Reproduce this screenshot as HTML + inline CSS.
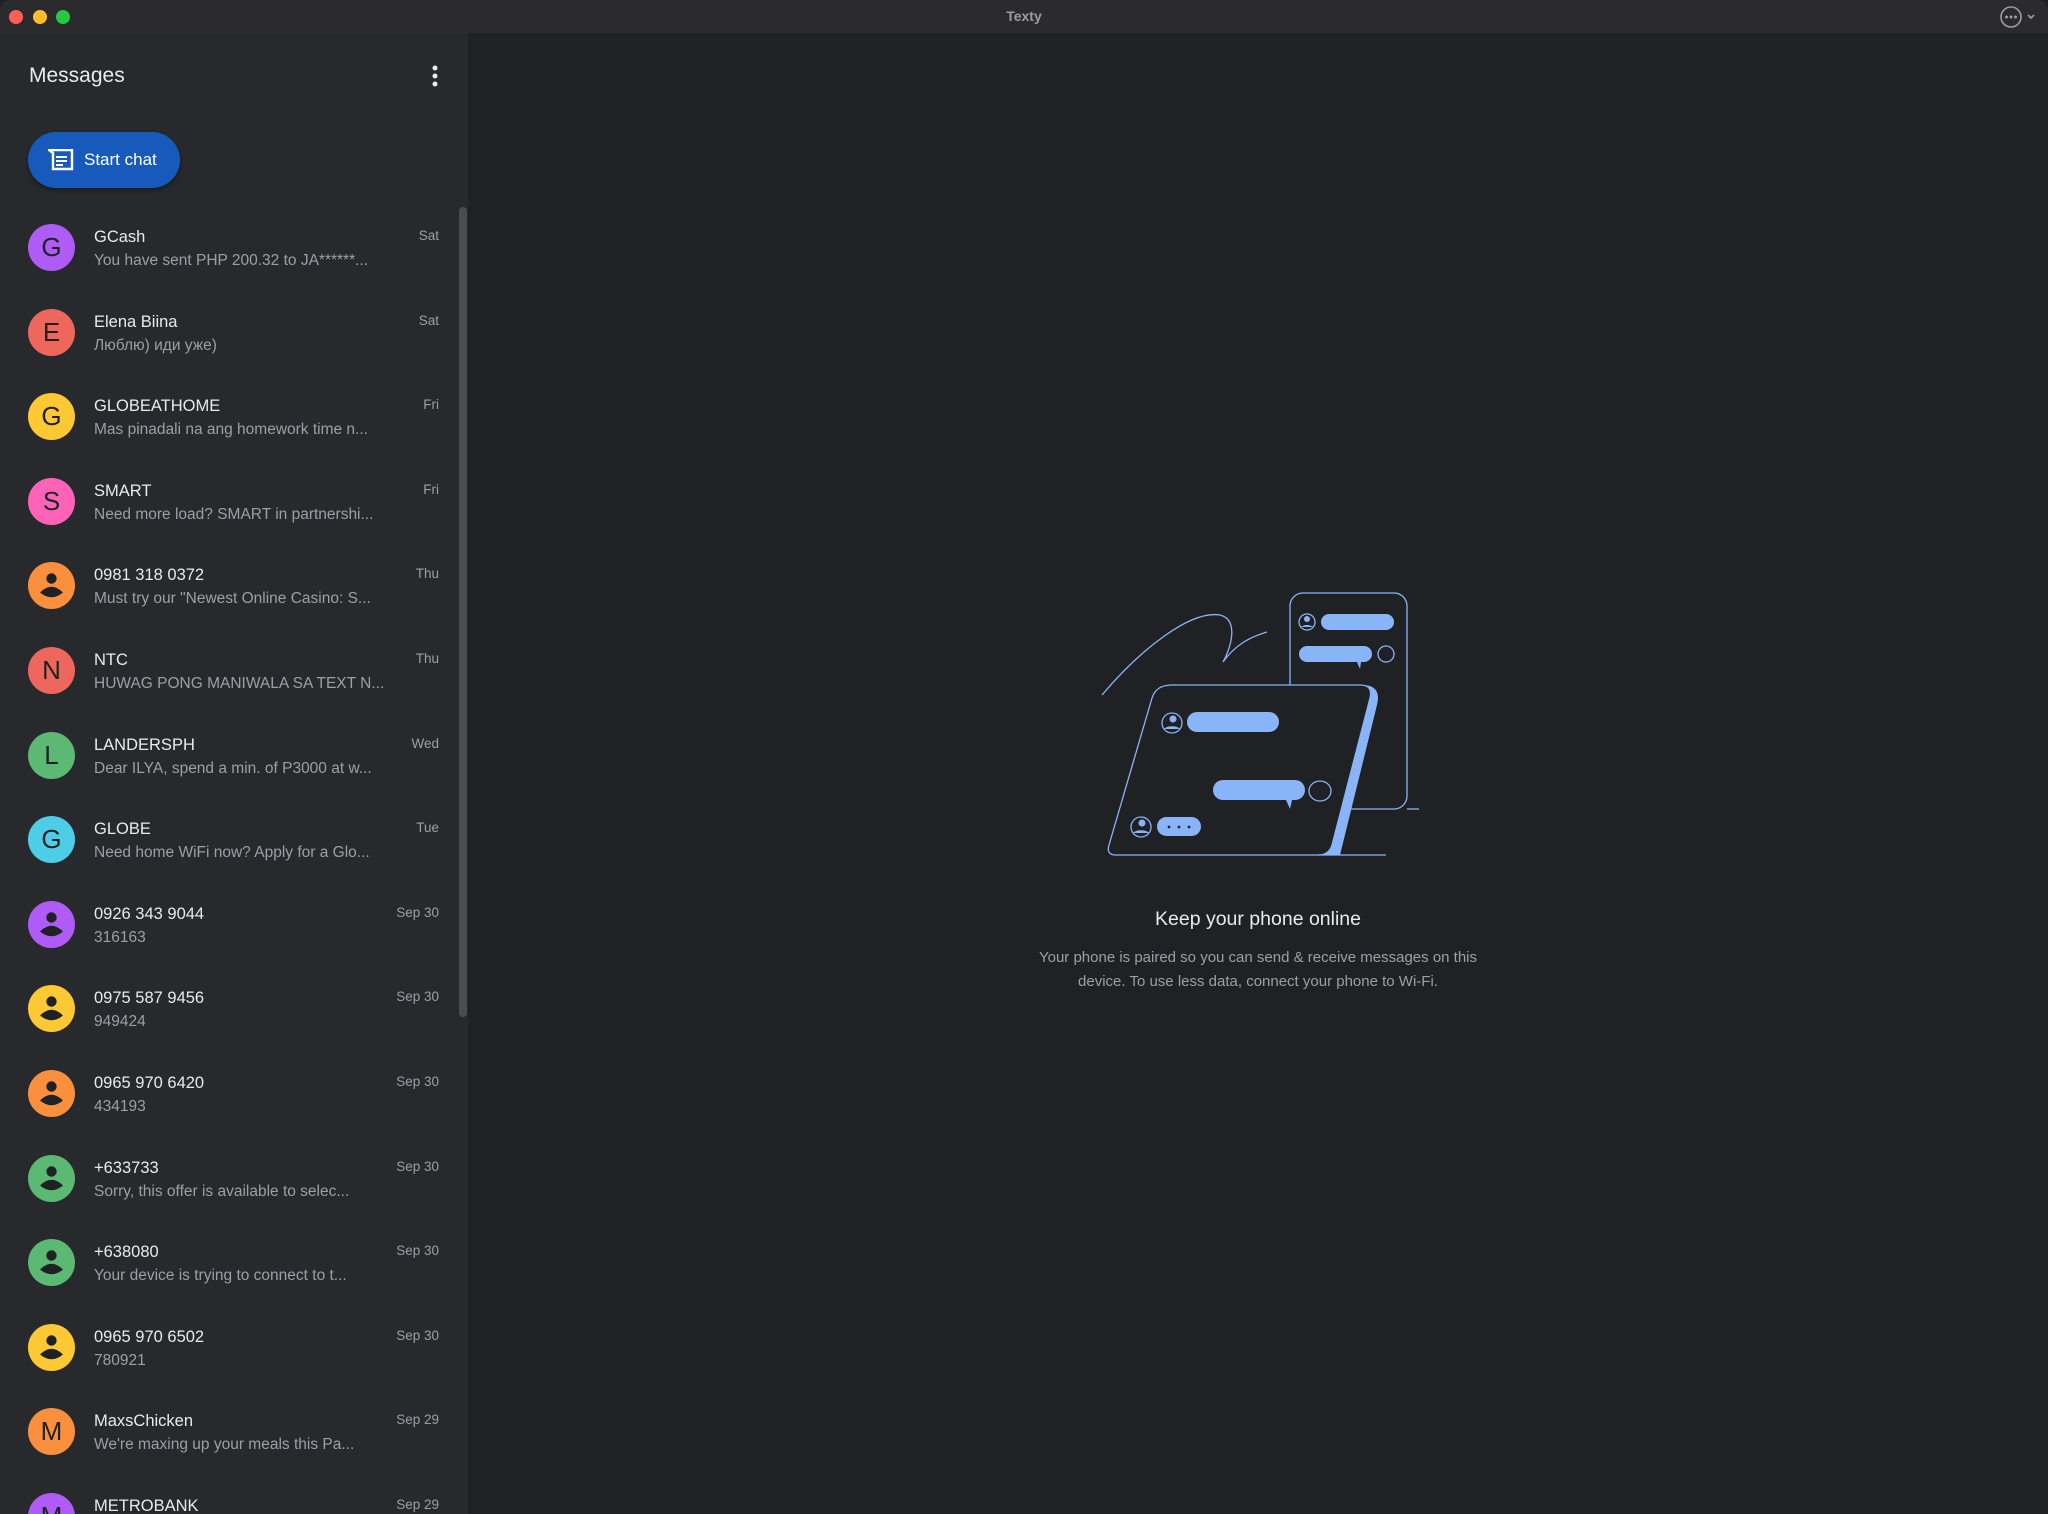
<!DOCTYPE html>
<html><head><meta charset="utf-8"><style>
*{margin:0;padding:0;box-sizing:border-box}
html,body{width:2048px;height:1514px;overflow:hidden}
body{background:#202124;font-family:"Liberation Sans","DejaVu Sans",sans-serif;position:relative}
#tb{position:absolute;left:0;top:0;width:2048px;height:33px;background:#2b2b2d;border-radius:10px 10px 0 0}
.tl{position:absolute;top:10px;width:14px;height:14px;border-radius:50%}
#side{position:absolute;left:0;top:33px;width:468px;height:1481px;background:#28292c;overflow:hidden}
.row{position:absolute;left:0;width:460px;height:84px}
.av{position:absolute;left:28px;width:47px;height:47px;border-radius:50%;color:#202124;font-size:26px;text-align:center;line-height:47px}
.nm{position:absolute;left:94px;font-size:16.5px;color:#e8eaed;white-space:nowrap}
.pv{position:absolute;left:94px;font-size:15.5px;color:#9aa0a6;white-space:nowrap}
.dt{position:absolute;right:21px;font-size:13.5px;color:#9aa0a6}
</style></head><body>
<div id="tb">
<div class="tl" style="left:9px;background:#fe5f57"></div>
<div class="tl" style="left:33px;background:#febc2e"></div>
<div class="tl" style="left:56px;background:#28c840"></div>
<div style="position:absolute;left:0;width:2048px;top:8px;text-align:center;color:#9d9d9f;font-size:14px;font-weight:bold">Texty</div>
<svg style="position:absolute;left:1998px;top:5px" width="46" height="24"><circle cx="13" cy="12" r="10" fill="none" stroke="#9d9d9f" stroke-width="1.6"/><circle cx="8.5" cy="12" r="1.5" fill="#9d9d9f"/><circle cx="13" cy="12" r="1.5" fill="#9d9d9f"/><circle cx="17.5" cy="12" r="1.5" fill="#9d9d9f"/><path d="M30 10l3 3 3-3" fill="none" stroke="#9d9d9f" stroke-width="1.6"/></svg>
</div>
<div id="side">
<div style="position:absolute;left:29px;top:31px;font-size:21px;color:#e8eaed">Messages</div>
<svg style="position:absolute;left:428px;top:30px" width="14" height="26"><circle cx="7" cy="5" r="2.5" fill="#e8eaed"/><circle cx="7" cy="13" r="2.5" fill="#e8eaed"/><circle cx="7" cy="21" r="2.5" fill="#e8eaed"/></svg>
<div style="position:absolute;left:28px;top:99px;width:152px;height:56px;border-radius:28px;background:#185abc;box-shadow:0 2px 5px rgba(0,0,0,.4)">
<svg style="position:absolute;left:20px;top:17px" width="26" height="22"><path d="M1 1h23v19H5V4z" fill="none" stroke="#fff" stroke-width="2.4"/><path d="M8 8h11M8 12h11M8 16h7" stroke="#fff" stroke-width="2"/></svg>
<div style="position:absolute;left:56px;top:18px;color:#fff;font-size:17px">Start chat</div>
</div>
<div style="position:absolute;left:459px;top:174px;width:8px;height:810px;border-radius:4px;background:#4b4c4f"></div>
<div id="rows"></div>
</div>
<svg style="position:absolute;left:1080px;top:580px" width="360" height="290" viewBox="0 0 360 290" fill="none" stroke="#8ab4f8" stroke-width="1.3">
<rect x="210" y="13" width="117" height="216" rx="13"/>
<path d="M327 229H339"/>
<circle cx="227" cy="42" r="8"/><circle cx="227" cy="39" r="3" fill="#8ab4f8" stroke="none"/><path d="M221 47a7 4 0 0 1 12 0" fill="#8ab4f8" stroke="none"/>
<rect x="241" y="34" width="73" height="16" rx="8" fill="#8ab4f8" stroke="none"/>
<path d="M227 66h57a8 8 0 0 1 0 16h-3l-1 7-3-7h-50a8 8 0 0 1 0-16z" fill="#8ab4f8" stroke="none"/>
<circle cx="306" cy="74" r="8"/>
<path d="M22 115C60 70 110 30 140 35C160 40 150 70 143 82C155 65 170 57 187 52"/>
<path d="M92 105H282Q302 105 297 125L260 275H240L248 270L288 120Q290 105 275 105" fill="#8ab4f8" stroke="none"/>
<path d="M92 105H280Q293 105 290 118L252 265Q249 275 238 275H36Q26 275 29 265L72 118Q76 105 92 105Z" fill="#202124"/>
<path d="M238 275H306"/>
<circle cx="92" cy="143" r="10"/><circle cx="93" cy="139" r="3.5" fill="#8ab4f8" stroke="none"/><path d="M84 149a9 5 0 0 1 16 0" fill="#8ab4f8" stroke="none"/>
<rect x="107" y="132" width="92" height="20" rx="10" fill="#8ab4f8" stroke="none"/>
<path d="M143 200h72a10 10 0 0 1 0 20h-3l-2 9-4-9h-63a10 10 0 0 1 0-20z" fill="#8ab4f8" stroke="none"/>
<ellipse cx="240" cy="211" rx="11" ry="10"/>
<circle cx="61" cy="247" r="10"/><circle cx="62" cy="243" r="3.5" fill="#8ab4f8" stroke="none"/><path d="M53 253a9 5 0 0 1 16 0" fill="#8ab4f8" stroke="none"/>
<rect x="77" y="237" width="44" height="19" rx="9.5" fill="#8ab4f8" stroke="none"/>
<circle cx="89" cy="247" r="1.4" fill="#202124" stroke="none"/><circle cx="99" cy="247" r="1.4" fill="#202124" stroke="none"/><circle cx="109" cy="247" r="1.4" fill="#202124" stroke="none"/>
</svg>
<div style="position:absolute;left:958px;width:600px;top:908px;text-align:center;color:#e8eaed;font-size:19.5px">Keep your phone online</div>
<div style="position:absolute;left:958px;width:600px;top:946px;text-align:center;color:#9aa0a6;font-size:15px;line-height:24px">Your phone is paired so you can send &amp; receive messages on this<br>device. To use less data, connect your phone to Wi-Fi.</div>
<script>
var P='<svg width="47" height="47" viewBox="0 0 47 47"><circle cx="23.5" cy="16.5" r="5.2" fill="#202124"/><path d="M12 30.5Q23.5 19 35 30.5Q23.5 40 12 30.5z" fill="#202124"/></svg>';
var d=[["G","#af5cf7","GCash","You have sent PHP 200.32 to JA******...","Sat"],
["E","#ee675c","Elena Biina","Люблю) иди уже)","Sat"],
["G","#fcc934","GLOBEATHOME","Mas pinadali na ang homework time n...","Fri"],
["S","#ff63b8","SMART","Need more load? SMART in partnershi...","Fri"],
["p","#fa903e","0981 318 0372","Must try our \"Newest Online Casino: S...","Thu"],
["N","#ee675c","NTC","HUWAG PONG MANIWALA SA TEXT N...","Thu"],
["L","#5bb974","LANDERSPH","Dear ILYA, spend a min. of P3000 at w...","Wed"],
["G","#4ecde6","GLOBE","Need home WiFi now? Apply for a Glo...","Tue"],
["p","#af5cf7","0926 343 9044","316163","Sep 30"],
["p","#fcc934","0975 587 9456","949424","Sep 30"],
["p","#fa903e","0965 970 6420","434193","Sep 30"],
["p","#5bb974","+633733","Sorry, this offer is available to selec...","Sep 30"],
["p","#5bb974","+638080","Your device is trying to connect to t...","Sep 30"],
["p","#fcc934","0965 970 6502","780921","Sep 30"],
["M","#fa903e","MaxsChicken","We're maxing up your meals this Pa...","Sep 29"],
["M","#af5cf7","METROBANK","","Sep 29"]];
var h='';
d.forEach(function(r,i){var c=248+i*84.6-33;var t=c-42;
h+='<div class="row" style="top:'+t+'px"><div class="av" style="top:18px;background:'+r[1]+'">'+(r[0]=='p'?P:r[0])+'</div><div class="nm" style="top:22px">'+r[2]+'</div><div class="pv" style="top:46px">'+r[3]+'</div><div class="dt" style="top:22px">'+r[4]+'</div></div>';});
document.getElementById('rows').innerHTML=h;
</script>
</body></html>
